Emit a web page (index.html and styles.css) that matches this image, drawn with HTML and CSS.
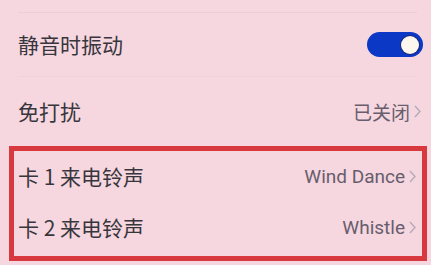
FILE: index.html
```html
<!DOCTYPE html>
<html lang="zh">
<head>
<meta charset="utf-8">
<link rel="stylesheet" href="styles.css">
</head>
<body>
<div class="screen">
  <div class="top-space"></div>
  <div class="divider"></div>
  <div class="row row-toggle">
    <span class="label">静音时振动</span>
    <span class="toggle"><span class="knob"></span></span>
  </div>
  <div class="divider faint"></div>
  <div class="row row-dnd">
    <span class="label">免打扰</span>
    <span class="value">已关闭<svg class="chev" viewBox="0 0 7 13"><polyline points="1,1 6,6.5 1,12"/></svg></span>
  </div>
  <div class="highlight">
    <div class="row row-a">
      <span class="label">卡 1 来电铃声</span>
      <span class="value latin">Wind Dance<svg class="chev" viewBox="0 0 7 13"><polyline points="1,1 6,6.5 1,12"/></svg></span>
    </div>
    <div class="row row-b">
      <span class="label">卡 2 来电铃声</span>
      <span class="value latin">Whistle<svg class="chev" viewBox="0 0 7 13"><polyline points="1,1 6,6.5 1,12"/></svg></span>
    </div>
  </div>
</div>
</body>
</html>
```
FILE: styles.css
```css
html, body {
  margin: 0;
  padding: 0;
}
body {
  background: #f6d6df;
  font-family: "Noto Sans CJK SC", "Noto Sans", sans-serif;
  width: 431px;
  height: 265px;
  overflow: hidden;
}
.screen {
  display: flex;
  flex-direction: column;
}
.top-space {
  height: 12px;
}
.divider {
  height: 1px;
  margin: 0 14px 0 18px;
  background: #ecccd5;
}
.divider.faint {
  background: #f0d2db;
}
.row {
  display: flex;
  align-items: center;
  justify-content: space-between;
}
.label {
  font-size: 21px;
  color: #38363d;
  line-height: 1;
}
.value {
  display: flex;
  align-items: center;
  font-size: 19px;
  color: #675e6d;
  line-height: 1;
}
.value.latin {
  font-family: Roboto, "Noto Sans", sans-serif;
}
.chev {
  width: 7px;
  height: 13px;
  margin-left: 4px;
  margin-right: 6px;
  fill: none;
  stroke: #b4abb8;
  stroke-width: 1.4;
}
.row-toggle {
  height: 63px;
  padding: 0 8px 0 18px;
}
.toggle {
  width: 56px;
  height: 25px;
  border-radius: 13px;
  background: #0b39c6;
  display: flex;
  align-items: center;
  justify-content: flex-end;
  padding-right: 4px;
  box-sizing: border-box;
}
.knob {
  width: 18px;
  height: 18px;
  border-radius: 50%;
  background: #fbf6ee;
  box-shadow: 0 0 0 1px #1a2a7a;
}
.row-dnd {
  height: 68px;
  padding: 0 4px 0 18px;
}
.highlight {
  margin: 1px 4px 0 9px;
  border: 5px solid #d8393f;
  height: 105px;
  box-sizing: content-box;
  display: flex;
  flex-direction: column;
}
.highlight .row {
  padding: 0 0 0 4px;
}
.row-a {
  height: 50px;
}
.row-b {
  height: 52px;
}
```
